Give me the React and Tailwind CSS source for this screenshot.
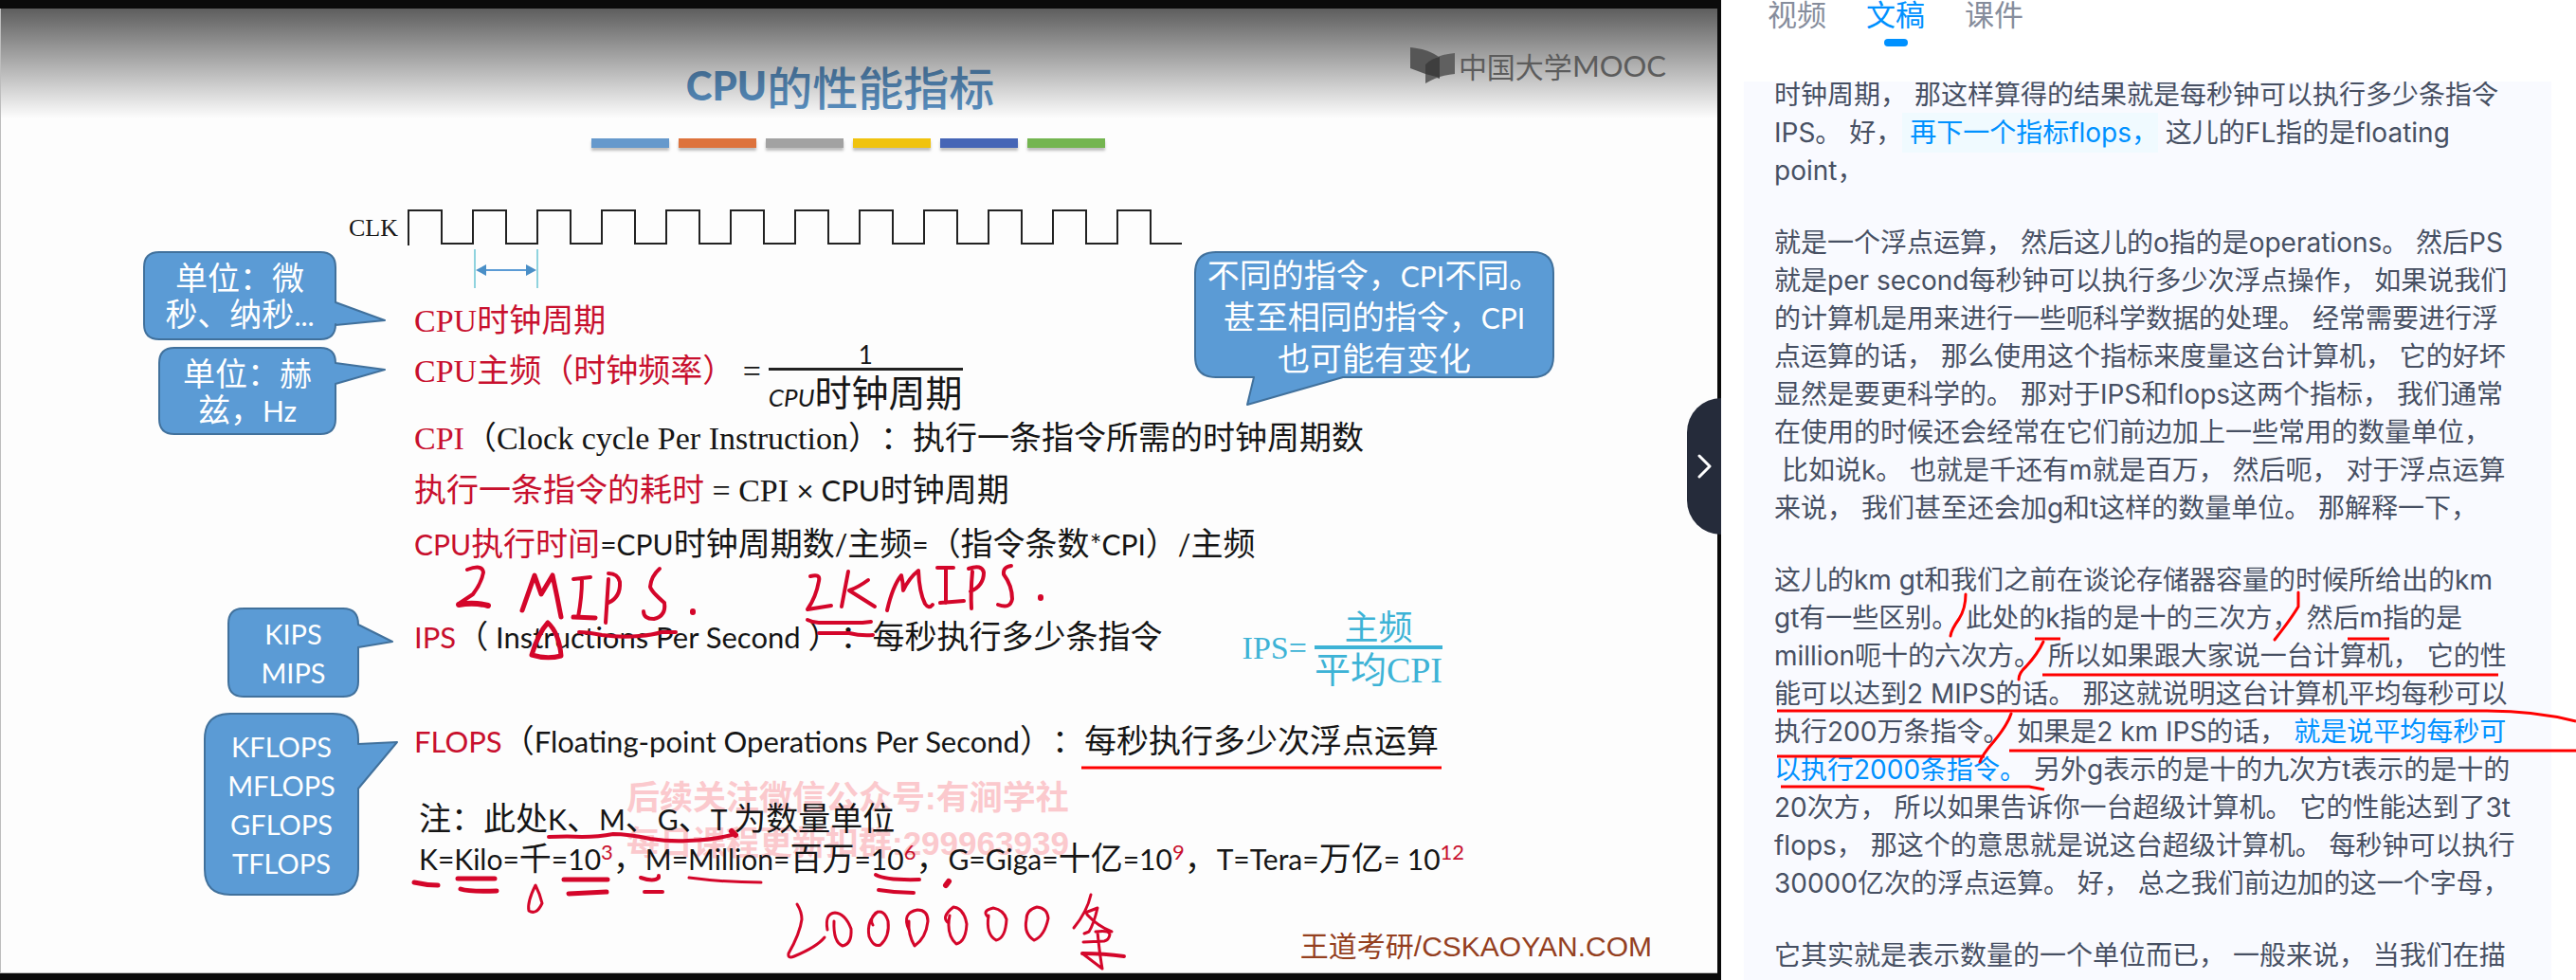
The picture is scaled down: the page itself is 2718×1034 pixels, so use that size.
import React from "react";

const BLUE_FILL = "#5b9bd5";
const BLUE_LINE = "#41719c";

const SERIF = "font-['Liberation_Serif','Noto_Sans_CJK_SC',serif] text-[34px]";
const LATO = "font-[Lato,'Noto_Sans_CJK_SC',sans-serif] text-[30px]";
const LATO_WIDE = "font-[Lato,'Noto_Sans_CJK_SC',sans-serif] text-[31px]";
const HAN = "font-['Noto_Sans_CJK_SC',sans-serif] text-[34px]";

const L = ({ children, red }) => (
  <span className={`${LATO} ${red ? "text-[#c8102e]" : ""}`}>{children}</span>
);
const W = ({ children, red }) => (
  <span className={`${LATO_WIDE} ${red ? "text-[#c8102e]" : ""}`}>{children}</span>
);
const H = ({ children, red }) => (
  <span className={`${HAN} ${red ? "text-[#c8102e]" : ""}`}>{children}</span>
);
const S = ({ children, red }) => (
  <span className={`${SERIF} ${red ? "text-[#c8102e]" : ""}`}>{children}</span>
);
const Pow = ({ n }) => (
  <>
    <L>10</L>
    <sup className="font-[Lato,sans-serif] text-[22px] text-[#c8102e]">{n}</sup>
  </>
);

function Callout({ w, h, path, className, children }) {
  return (
    <div className={`relative flex flex-col items-center justify-center text-white ${className}`}>
      <svg
        className="absolute left-0 top-0 overflow-visible"
        width={w}
        height={h}
        aria-hidden="true"
      >
        <path d={path} fill={BLUE_FILL} stroke={BLUE_LINE} strokeWidth="2" strokeLinejoin="round" />
      </svg>
      <div className="relative flex flex-col items-center whitespace-nowrap">{children}</div>
    </div>
  );
}

function ClockWave() {
  let d = "M1 49V12";
  for (let i = 0; i < 12; i++) {
    const x = 1 + i * 68;
    d += `V12H${x + 35}V47H${Math.min(x + 68, 818)}`;
  }
  return (
    <svg width="822" height="101" className="block" fill="none" aria-hidden="true">
      <path d={d} stroke="#222" strokeWidth="2" />
      <path d="M71 53V94M137 53V94" stroke="#8fd3de" strokeWidth="2" />
      <path d="M76 75H132" stroke="#5b9bd5" strokeWidth="2" />
      <path d="M72 75L83 69V81ZM136 75L125 69V81Z" fill="#4a8fc7" />
    </svg>
  );
}

function MoocLogo() {
  return (
    <div className="absolute right-[54px] top-[40px] flex items-center gap-[3px] text-[#5c5c5c]">
      <svg width="49" height="40" viewBox="0 0 49 40" aria-hidden="true">
        <path d="M1 1C12 2 24 5 32 12V34L17 29L1 23Z" fill="#565656" />
        <path d="M17 39V19C24 12 36 8 48 7V29C36 30 26 34 17 39Z" fill="#606060" />
        <path d="M17 19C22 14 27 12 32 11V33L17 29Z" fill="#3e3e3e" />
      </svg>
      <span className="flex items-center leading-10">
        <span className="font-['Noto_Sans_CJK_SC',sans-serif] text-[30px]">中国大学</span>
        <span className="font-[Lato,sans-serif] text-[31px]">MOOC</span>
      </span>
    </div>
  );
}

function PenNotes() {
  return (
    <svg
      className="pointer-events-none absolute left-0 top-0"
      width="1812"
      height="1034"
      fill="none"
      stroke="#d4062a"
      strokeWidth="4"
      strokeLinecap="round"
      strokeLinejoin="round"
      aria-hidden="true"
    >
      {/* 2 MIPS. */}
      <path d="M493 601Q509 595 510 604Q508 615 499 627L484 637" />
      <path d="M484 638Q500 635 515 639" strokeWidth="6" />
      <path d="M551 644L564 607L571 627L583 607Q588 630 592 651" strokeWidth="5" />
      <path d="M605 611L623 609M614 611Q614 630 610 651" />
      <path d="M605 651L628 652" strokeWidth="5" />
      <path d="M642 611L639 657M642 605Q652 605 654 614Q655 630 642 636" />
      <path d="M696 600Q687 608 686 619Q687 624 701 636Q703 650 690 653Q679 653 679 645" />
      <path d="M731 645v1" strokeWidth="6" />
      <path d="M611 667Q620 667 635 670Q655 673 675 671Q688 670 698 667H713" />
      <path d="M578 657Q568 668 561 691Q577 696 592 692Q590 668 578 657Z" strokeWidth="5" />
      {/* 2K MIPS. */}
      <path d="M855 608Q866 605 864 613Q861 630 852 643L877 639" />
      <path d="M895 603L888 640M916 612Q905 620 896 623Q904 628 923 640" />
      <path d="M936 644Q942 618 951 607Q953 615 953 623Q959 610 969 602Q970 625 976 637Q980 643 984 638" />
      <path d="M989 599H1006M998 600V636M992 636L1017 634" />
      <path d="M1026 603Q1024 625 1025 642M1022 600Q1036 595 1038 604Q1038 618 1024 624" />
      <path d="M1067 597Q1058 598 1059 606Q1068 618 1068 632Q1066 643 1053 638" />
      <path d="M1098 630v1" strokeWidth="6" />
      <path d="M852 654Q858 657 864 657H910L919 656M864 668H896Q908 671 921 670" />
      {/* unit underlines */}
      <path d="M579 883Q600 882 614 883Q632 883 647 880Q662 880 686 885Q706 888 726 887Q756 886 775 880" />
      <path d="M772 877L776 881" strokeWidth="6" />
      <path d="M437 931Q450 934 462 934M483 927H522M486 938Q495 941 524 940" strokeWidth="5" />
      <path d="M565 934Q556 952 558 961Q566 966 572 953Q570 944 565 934Z" strokeWidth="3" />
      <path d="M595 928H641M600 943L640 941" strokeWidth="5" />
      <path d="M676 926Q690 931 695 926L695 924M680 941H699" />
      <path d="M727 926Q765 931 803 931" strokeWidth="3" />
      <path d="M924 923Q935 929 970 928M927 939Q945 942 964 942" />
      <path d="M1001 930L998 934" strokeWidth="6" />
      {/* 2000000 */}
      <g strokeWidth="3">
        <path d="M841 954Q846 962 846 970Q844 985 832 1006Q831 1012 838 1009Q862 999 870 989" />
        <path d="M873 981Q870 964 881 963Q892 964 898 980Q899 996 889 998Q879 994 880 972" />
        <path d="M926 962Q914 972 917 988Q922 1000 929 997Q939 988 937 972Q933 959 924 963Q917 970 921 976" />
        <path d="M959 981Q951 963 968 960Q979 960 979 972Q977 990 965 998Q958 986 959 972" />
        <path d="M1001 974Q992 968 1006 957Q1017 958 1020 975Q1019 994 1009 996Q998 986 1002 966" />
        <path d="M1043 968Q1035 961 1048 958Q1059 960 1062 970Q1061 990 1051 992Q1040 986 1043 966" />
        <path d="M1083 970Q1083 960 1094 957Q1105 958 1106 969Q1102 988 1091 992Q1080 985 1083 970Z" />
        <path d="M1151 944Q1147 962 1133 979M1145 963L1158 958Q1154 975 1149 983L1144 985M1147 965Q1158 977 1173 983" />
        <path d="M1156 983Q1170 981 1171 986Q1170 992 1165 993L1143 994M1158 983Q1160 1005 1163 1022L1142 1006" />
        <path d="M1142 1006Q1165 1006 1186 1009" strokeWidth="4" />
      </g>
      <path d="M1141 810H1521" stroke="#ff0000" strokeWidth="3" strokeLinecap="butt" />
    </svg>
  );
}

const bars = [
  "bg-[#6699cc]",
  "bg-[#dd733d]",
  "bg-[#a2a2a2]",
  "bg-[#f0c30f]",
  "bg-[#4565b6]",
  "bg-[#74b550]",
];

function Slide() {
  return (
    <section className="relative min-w-0 flex-1 overflow-hidden bg-[#0b0b0b] pb-[7px] pr-[4px] pt-[9px]">
      <div className="relative h-full overflow-hidden border-b border-l border-[#bdbdbd] bg-[#fdfdfd] text-[#151515] [text-spacing-trim:space-all]">
        <div className="absolute left-[660px] top-[809px] whitespace-nowrap font-['Liberation_Sans','Noto_Sans_CJK_SC',sans-serif] text-[35px] font-bold leading-[48px] text-[#fbc9cd]">
          <div>后续关注微信公众号:有涧学社</div>
          <div>每日课程更新扣群:299963939</div>
        </div>

        <header className="flex flex-col items-center pr-[24px] pt-[45px]">
          <h1 className="flex items-center pr-[16px] leading-[72px] text-[#5b93c6]">
            <span className="font-[Lato,sans-serif] text-[42px] font-black">CPU</span>
            <span className="font-['Noto_Sans_CJK_SC',sans-serif] text-[48px] font-medium">的性能指标</span>
          </h1>
          <div className="mt-[20px] flex gap-[10px]">
            {bars.map((c) => (
              <span key={c} className={`h-[10px] w-[82px] shadow-[0_3px_3px_rgba(0,0,0,0.25)] ${c}`} />
            ))}
          </div>
        </header>

        <div className="relative mt-[54px] flex">
          <div className="flex w-[429px] flex-none flex-col">
            <div className="h-14 pr-[10px] text-right font-['Liberation_Serif',serif] text-[26px] leading-[62px]">
              CLK
            </div>
            <Callout
              w={202}
              h={92}
              className="ml-[151px] h-[92px] w-[202px]"
              path="M16 0H186Q202 0 202 16V53L254 72L202 77V76Q202 92 186 92H16Q0 92 0 76V16Q0 0 16 0Z"
            >
              <div className={`${HAN} leading-[38px]`}>单位：微</div>
              <div className={`${HAN} leading-[38px]`}>
                秒、纳秒<L>...</L>
              </div>
            </Callout>
            <Callout
              w={186}
              h={91}
              className="ml-[167px] mt-[9px] h-[91px] w-[186px]"
              path="M16 0H170Q186 0 186 16L238 23L186 38V75Q186 91 170 91H16Q0 91 0 75V16Q0 0 16 0Z"
            >
              <div className={`${HAN} leading-[38px]`}>单位：赫</div>
              <div className={`${HAN} leading-[38px]`}>
                兹，<L>Hz</L>
              </div>
            </Callout>
            <Callout
              w={137}
              h={93}
              className="ml-[240px] mt-[184px] h-[93px] w-[137px]"
              path="M16 0H121Q137 0 137 17L173 35L137 41V77Q137 93 121 93H16Q0 93 0 77V16Q0 0 16 0Z"
            >
              <div className="font-[Lato,sans-serif] text-[29px] leading-[41px]">KIPS</div>
              <div className="font-[Lato,sans-serif] text-[29px] leading-[41px]">MIPS</div>
            </Callout>
            <Callout
              w={162}
              h={191}
              className="ml-[215px] mt-[18px] h-[191px] w-[162px]"
              path="M27 0H135Q162 0 162 27V32L203 30L162 79V164Q162 191 135 191H27Q0 191 0 164V27Q0 0 27 0Z"
            >
              {["KFLOPS", "MFLOPS", "GFLOPS", "TFLOPS"].map((t) => (
                <div key={t} className="font-[Lato,sans-serif] text-[29px] leading-[41px]">
                  {t}
                </div>
              ))}
            </Callout>
          </div>

          <div className="flex min-w-0 flex-1 flex-col whitespace-pre">
            <ClockWave />
            <div className="flex flex-col pl-[7px]">
              <p className="h-[50px] leading-[50px]">
                <S red>CPU</S>
                <H red>时钟周期</H>
              </p>
              <div className="flex h-[74px] items-start leading-[56px]">
                <p>
                  <S red>CPU</S>
                  <H red>主频（时钟频率）</H>
                  <S> =</S>
                </p>
                <div className="ml-2 flex flex-col items-center">
                  <span className="font-[Lato,sans-serif] text-[26px] leading-[27px]">1</span>
                  <span className="h-[3px] w-full bg-[#222]" />
                  <span className="flex items-baseline leading-[42px]">
                    <span className="font-[Lato,sans-serif] text-[26px] italic">CPU</span>
                    <span className="font-['Noto_Sans_CJK_SC',sans-serif] text-[39px]">
                      时钟周期
                    </span>
                  </span>
                </div>
              </div>
              <p className="h-[50px] leading-[50px]">
                <S red>CPI</S>
                <H>（</H>
                <S>Clock cycle Per Instruction</S>
                <H>）：执行一条指令所需的时钟周期数</H>
              </p>
              <p className="h-[60px] leading-[60px]">
                <H red>执行一条指令的耗时</H>
                <S> = CPI </S>
                <W>× CPU</W>
                <H>时钟周期</H>
              </p>
              <p className="h-[54px] leading-[54px]">
                <L red>CPU</L>
                <H red>执行时间</H>
                <L>=CPU</L>
                <H>时钟周期数</H>
                <L>/</L>
                <H>主频</H>
                <L>=</L>
                <H>（指令条数</H>
                <L>*CPI</L>
                <H>）</H>
                <L>/</L>
                <H>主频</H>
              </p>
              <div className="flex h-[150px] items-center">
                <p className="leading-[50px]">
                  <W red>IPS</W>
                  <H>（</H>
                  <W> Instructions Per Second </W>
                  <H>）：每秒执行多少条指令</H>
                </p>
                <div className="ml-[84px] mt-[18px] flex items-center gap-[8px] text-[#3db3d6]">
                  <S>IPS=</S>
                  <span className="flex flex-col items-center">
                    <span className="font-['Noto_Sans_CJK_SC',sans-serif] text-[36px] leading-[44px]">
                      主频
                    </span>
                    <span className="h-1 w-full bg-[#3db3d6]" />
                    <span className="font-['Liberation_Serif','Noto_Sans_CJK_SC',serif] text-[38px] leading-[44px]">
                      平均CPI
                    </span>
                  </span>
                </div>
              </div>
              <p className="h-[62px] leading-[62px]">
                <W red>FLOPS</W>
                <H>（</H>
                <W>Floating-point Operations Per Second</W>
                <H>）：每秒执行多少次浮点运算</H>
              </p>
              <p className="mt-[30px] h-[42px] pl-[5px] leading-[42px]">
                <H>注：此处</H>
                <L>K</L>
                <H>、</H>
                <L>M</L>
                <H>、</H>
                <L>G</L>
                <H>、</H>
                <L>T </L>
                <H>为数量单位</H>
              </p>
              <p className="h-[42px] pl-[5px] leading-[42px]">
                <L>K=Kilo=</L>
                <H>千</H>
                <L>=</L>
                <Pow n="3" />
                <H>，</H>
                <L>M=Million=</L>
                <H>百万</H>
                <L>=</L>
                <Pow n="6" />
                <H>，</H>
                <L>G=Giga=</L>
                <H>十亿</H>
                <L>=</L>
                <Pow n="9" />
                <H>，</H>
                <L>T=Tera=</L>
                <H>万亿</H>
                <L>= </L>
                <Pow n="12" />
              </p>
            </div>
          </div>

          <Callout
            w={378}
            h={132}
            className="!absolute left-[1260px] top-[56px] h-[132px] w-[378px]"
            path="M22 0H356Q378 0 378 22V110Q378 132 356 132H156L55 161L62 132H22Q0 132 0 110V22Q0 0 22 0Z"
          >
            <div className={`${HAN} leading-[41px]`}>
              不同的指令，<L>CPI</L>不同。
            </div>
            <div className={`${HAN} leading-[41px]`}>
              甚至相同的指令，<L>CPI</L>
            </div>
            <div className={`${HAN} leading-[41px]`}>也可能有变化</div>
          </Callout>
        </div>

        <footer className="mt-[30px] pr-[69px] text-right font-['Liberation_Sans','Noto_Sans_CJK_SC',sans-serif] text-[30px] leading-[50px] text-[#94401f]">
          王道考研/CSKAOYAN.COM
        </footer>

        <div className="pointer-events-none absolute inset-x-0 top-0 h-[116px] bg-linear-to-b from-black/63 to-transparent" />
        <MoocLogo />
      </div>
      <PenNotes />
      <button
        type="button"
        aria-label="收起侧栏"
        className="absolute right-0 top-[420px] flex h-36 w-9 items-center justify-center rounded-l-[36px] bg-[#252b3a]"
      >
        <svg width="16" height="26" viewBox="0 0 16 26" fill="none" aria-hidden="true">
          <path d="M3 2L14 13L3 24" stroke="#fff" strokeWidth="3" strokeLinecap="round" strokeLinejoin="round" />
        </svg>
      </button>
    </section>
  );
}

const B = ({ children }) => <span className="text-[#0091ff]">{children}</span>;

const paragraphs = [
  [
    "时钟周期， 那这样算得的结果就是每秒钟可以执行多少条指令",
    <>
      IPS。 好，
      <span className="bg-[#f0faff] py-1 text-[#0091ff]"> 再下一个指标flops，</span> 这儿的FL指的是floating
    </>,
    "point，",
  ],
  [
    "就是一个浮点运算， 然后这儿的o指的是operations。 然后PS",
    "就是per second每秒钟可以执行多少次浮点操作， 如果说我们",
    "的计算机是用来进行一些呃科学数据的处理。 经常需要进行浮",
    "点运算的话， 那么使用这个指标来度量这台计算机， 它的好坏",
    "显然是要更科学的。 那对于IPS和flops这两个指标， 我们通常",
    "在使用的时候还会经常在它们前边加上一些常用的数量单位，",
    " 比如说k。 也就是千还有m就是百万， 然后呃， 对于浮点运算",
    "来说， 我们甚至还会加g和t这样的数量单位。 那解释一下，",
  ],
  [
    "这儿的km gt和我们之前在谈论存储器容量的时候所给出的km",
    "gt有一些区别。 此处的k指的是十的三次方， 然后m指的是",
    "million呃十的六次方。 所以如果跟大家说一台计算机， 它的性",
    "能可以达到2 MIPS的话。 那这就说明这台计算机平均每秒可以",
    <>
      执行200万条指令。 如果是2 km IPS的话，<B> 就是说平均每秒可</B>
    </>,
    <>
      <B>以执行2000条指令。</B> 另外g表示的是十的九次方t表示的是十的
    </>,
    "20次方， 所以如果告诉你一台超级计算机。 它的性能达到了3t",
    "flops， 那这个的意思就是说这台超级计算机。 每秒钟可以执行",
    "30000亿次的浮点运算。 好， 总之我们前边加的这一个字母，",
  ],
  ["它其实就是表示数量的一个单位而已， 一般来说， 当我们在描"],
];

function RedMarks() {
  return (
    <svg
      className="pointer-events-none absolute left-0 top-0"
      width="902"
      height="1034"
      viewBox="1816 0 902 1034"
      fill="none"
      stroke="#ff0000"
      strokeWidth="3"
      strokeLinecap="round"
      aria-hidden="true"
    >
      <path d="M2074 627Q2074 642 2067 653Q2059 664 2058 671" />
      <path d="M2425 625V640Q2418 652 2400 675" />
      <path d="M2156 677Q2150 690 2138 703Q2130 710 2130 717" />
      <path d="M2122 753Q2118 765 2104 782Q2091 797 2089 804" />
      <g strokeLinecap="butt">
        <path d="M2147 674H2174M2477 674H2521M2155 712H2636" />
        <path d="M1875 750H2624Q2675 750 2718 761" />
        <path d="M1875 798H2094M2120 792H2718M1879 830H2141L2157 833" />
      </g>
    </svg>
  );
}

function Transcript() {
  return (
    <aside className="relative flex h-full w-[902px] flex-none flex-col overflow-hidden bg-white">
      <nav className="flex h-[86px] flex-none items-start gap-[42px] pl-[49px] font-['Noto_Sans_CJK_SC',sans-serif] text-[31px] leading-[28px] text-[#868d9c]">
        <button type="button">视频</button>
        <button type="button" className="flex flex-col items-center text-[#0091ff]">
          文稿
          <span className="mt-[13px] h-2 w-[25px] rounded-full bg-[#0091ff]" />
        </button>
        <button type="button">课件</button>
      </nav>
      <div className="ml-6 mr-[26px] min-h-0 flex-1 overflow-hidden bg-[#f9faff] pl-8">
        <div className="-mt-[6px] flex flex-col gap-9 whitespace-pre font-[Inter,'Noto_Sans_CJK_SC',sans-serif] text-[28px] leading-10 text-[#475063]">
          {paragraphs.map((lines, i) => (
            <p key={i}>
              {lines.map((line, j) => (
                <span key={j} className="block h-10">
                  {line}
                </span>
              ))}
            </p>
          ))}
        </div>
      </div>
      <RedMarks />
    </aside>
  );
}

export default function App() {
  return (
    <main lang="zh-CN" className="flex h-screen overflow-hidden bg-white">
      <Slide />
      <Transcript />
    </main>
  );
}
